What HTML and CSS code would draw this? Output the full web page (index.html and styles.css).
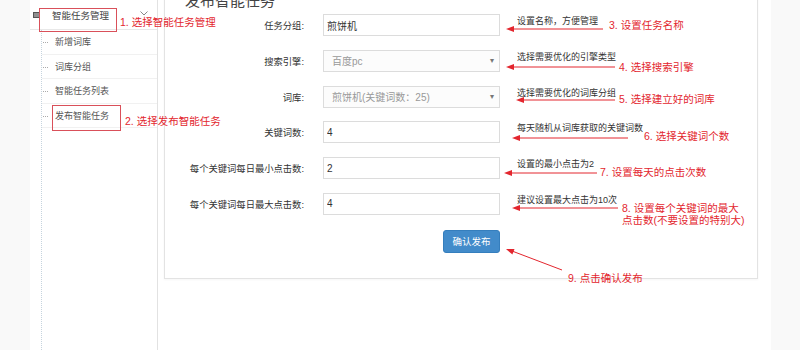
FILE: index.html
```html
<!DOCTYPE html>
<html lang="zh-CN">
<head>
  <meta charset="UTF-8" />
  <meta name="viewport" content="width=device-width, initial-scale=1.0">
  <title>发布智能任务</title>
  <link rel="stylesheet" href="styles.css">
</head>

<body>
  <div class="page">
    <aside class="sidebar">
      <div class="menu-head">
        <svg class="menu-icon" width="7" height="6" viewBox="0 0 7 6">
          <rect x="0" y="0" width="7" height="6" fill="#555"/>
          <rect x="1" y="1.5" width="5" height="1" fill="#ccc"/>
          <rect x="1" y="3.5" width="5" height="1" fill="#ccc"/>
        </svg>
        <span>智能任务管理</span>
        <svg class="chevron" width="8" height="5" viewBox="0 0 8 5">
          <polyline points="0.5,0.5 4,4 7.5,0.5" fill="none" stroke="#888" stroke-width="1"/>
        </svg>
      </div>
      <ul class="submenu">
        <li>新增词库</li>
        <li>词库分组</li>
        <li>智能任务列表</li>
        <li>发布智能任务</li>
      </ul>
    </aside>

    <main class="main">
      <section class="card">
        <h3 class="card-title">发布智能任务</h3>
        <form class="form">
          <div class="form-row">
            <label>任务分组:</label>
            <input class="field" type="text" value="煎饼机">
            <span class="hint">设置名称，方便管理</span>
          </div>
          <div class="form-row">
            <label>搜索引擎:</label>
            <div class="field select">百度pc<span class="caret">▾</span></div>
            <span class="hint">选择需要优化的引擎类型</span>
          </div>
          <div class="form-row">
            <label>词库:</label>
            <div class="field select">煎饼机(关键词数：25)<span class="caret">▾</span></div>
            <span class="hint">选择需要优化的词库分组</span>
          </div>
          <div class="form-row">
            <label>关键词数:</label>
            <input class="field" type="text" value="4">
            <span class="hint">每天随机从词库获取的关键词数</span>
          </div>
          <div class="form-row">
            <label>每个关键词每日最小点击数:</label>
            <input class="field" type="text" value="2">
            <span class="hint">设置的最小点击为2</span>
          </div>
          <div class="form-row">
            <label>每个关键词每日最大点击数:</label>
            <input class="field" type="text" value="4">
            <span class="hint">建议设置最大点击为10次</span>
          </div>
          <div class="form-actions">
            <button type="button" class="btn-primary">确认发布</button>
          </div>
        </form>
      </section>
    </main>
  </div>

  <!-- annotation layer -->
  <div class="notes">
    <div class="note-box box-1"></div>
    <div class="note-box box-2"></div>
    <svg class="arrows" width="800" height="350" viewBox="0 0 800 350">
      <g stroke="#e3262e" stroke-width="1">
        <line x1="603" y1="29" x2="513" y2="29"/>
        <line x1="615" y1="67" x2="513" y2="67"/>
        <line x1="615" y1="100" x2="523" y2="100"/>
        <line x1="628" y1="138" x2="519" y2="138"/>
        <line x1="597" y1="173" x2="511" y2="173"/>
        <line x1="618" y1="208" x2="519" y2="208"/>
        <line x1="562" y1="270" x2="512" y2="251"/>
      </g>
      <g fill="#e3262e">
        <polygon points="506,29 514,26 514,32"/>
        <polygon points="506,67 514,64 514,70"/>
        <polygon points="516,100 524,97 524,103"/>
        <polygon points="512,138 520,135 520,141"/>
        <polygon points="504,173 512,170 512,176"/>
        <polygon points="512,208 520,205 520,211"/>
        <polygon points="506,249 514.5,249 512.4,254.6"/>
      </g>
    </svg>
    <span class="note n1">1. 选择智能任务管理</span>
    <span class="note n2">2. 选择发布智能任务</span>
    <span class="note n3">3. 设置任务名称</span>
    <span class="note n4">4. 选择搜索引擎</span>
    <span class="note n5">5. 选择建立好的词库</span>
    <span class="note n6">6. 选择关键词个数</span>
    <span class="note n7">7. 设置每天的点击次数</span>
    <span class="note n8">8. 设置每个关键词的最大<br>点击数(不要设置的特别大)</span>
    <span class="note n9">9. 点击确认发布</span>
  </div>
</body>
</html>
```

FILE: styles.css
```css
body {
  margin: 0;
  padding: 0;
  background-color: #f9f9f9;
  font-family: 'Liberation Sans', 'Noto Sans CJK SC', sans-serif;
  color: #333;
}

.page {
  margin-left: 30px;
  width: 741px;
  height: 350px;
  background-color: white;
  display: flex;
  overflow: hidden;
}

/* sidebar */
.sidebar {
  width: 128px;
  box-sizing: border-box;
  border-right: 1px solid #e2e2e2;
  display: flex;
  flex-direction: column;
}

.menu-head {
  height: 29px;
  border-bottom: 1px solid #e8e8e8;
  display: flex;
  align-items: center;
  padding-left: 3px;
  font-size: 9.5px;
  color: #444;
}

.menu-icon {
  margin-right: 12px;
}

.chevron {
  margin-left: auto;
  margin-right: 9px;
  margin-bottom: 3px;
}

.submenu {
  flex: 1;
  margin: 0 0 0 11px;
  padding: 0;
  list-style: none;
  border-left: 1px dotted #c6d4de;
}

.submenu li {
  height: 24.5px;
  line-height: 24px;
  box-sizing: border-box;
  border-bottom: 1px solid #f1f1f1;
  padding-left: 1px;
  font-size: 9px;
  color: #555;
}

.submenu li::before {
  content: "";
  display: inline-block;
  width: 5px;
  margin-right: 7px;
  vertical-align: middle;
  border-top: 1px dotted #aaa;
}

/* main */
.main {
  flex: 1;
  padding-left: 6px;
}

.card {
  width: 594px;
  margin-top: -12px;
  box-sizing: border-box;
  border: 1px solid #e3e3e3;
  box-shadow: 0 1px 2px rgba(0, 0, 0, 0.04);
  padding-bottom: 25px;
}

.card-title {
  margin: 0 0 1px 0;
  padding-left: 20px;
  height: 24px;
  line-height: 24px;
  font-size: 15px;
  font-weight: normal;
  color: #444;
}

.form-row {
  display: flex;
  align-items: center;
  height: 22px;
  margin-bottom: 13.8px;
}

.form-row label {
  width: 139px;
  margin-right: 19px;
  text-align: right;
  font-size: 9.3px;
  color: #333;
}

.field {
  width: 177px;
  height: 22px;
  box-sizing: border-box;
  margin: 0;
  border: 1px solid #dcdcdc;
  padding: 0 3px;
  font-family: inherit;
  font-size: 10px;
  color: #333;
  background-color: white;
}

.select {
  display: flex;
  align-items: center;
  justify-content: space-between;
  padding-left: 8px;
  padding-right: 5px;
  color: #999;
  background-color: #fcfcfc;
}

.caret {
  font-size: 8px;
  color: #777;
}

.hint {
  align-self: flex-start;
  margin-left: 17px;
  line-height: 14px;
  font-size: 9px;
  color: #333;
  white-space: nowrap;
}

.form-actions {
  margin-top: 15px;
  padding-left: 158px;
  width: 177px;
  text-align: right;
}

.btn-primary {
  width: 57px;
  height: 23px;
  border: 1px solid #357ebd;
  border-radius: 3px;
  background-color: #428bca;
  color: white;
  font-family: inherit;
  font-size: 9.5px;
  padding: 0;
}

/* annotations drawn over the screenshot */
.notes {
  position: absolute;
  top: 0;
  left: 0;
  width: 800px;
  height: 350px;
  pointer-events: none;
}

.arrows {
  position: absolute;
  top: 0;
  left: 0;
}

.note-box {
  position: absolute;
  border: 1px solid #d9505a;
}

.box-1 { left: 39px; top: 8px; width: 76px; height: 22px; }
.box-2 { left: 52px; top: 105px; width: 67px; height: 24px; }

.note {
  position: absolute;
  font-size: 10.5px;
  line-height: 13px;
  color: #e3262e;
  white-space: nowrap;
}

.n1 { left: 120px; top: 16px; }
.n2 { left: 125px; top: 115px; }
.n3 { left: 609px; top: 19px; }
.n4 { left: 619px; top: 61px; }
.n5 { left: 619px; top: 93px; }
.n6 { left: 644px; top: 130px; }
.n7 { left: 600px; top: 166px; }
.n8 { left: 622px; top: 202px; line-height: 12px; }
.n9 { left: 568px; top: 272px; }
```
